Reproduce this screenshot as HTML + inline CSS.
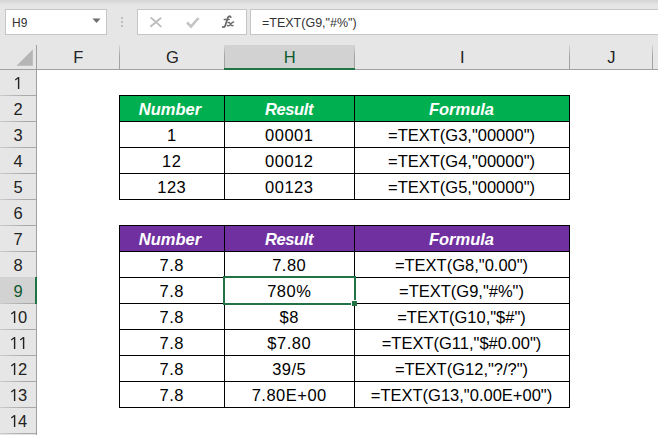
<!DOCTYPE html><html><head><meta charset="utf-8"><style>
*{margin:0;padding:0;box-sizing:border-box}
html,body{width:658px;height:435px;overflow:hidden;background:#fff}
body{position:relative;font-family:"Liberation Sans",sans-serif}
.a{position:absolute}
.t{position:absolute;white-space:nowrap;text-align:center;line-height:26px}
</style></head><body><div class="a" style="left:0;top:0;width:658px;height:69px;background:#e6e6e6"></div>
<div class="a" style="left:0;top:0;width:658px;height:5px;background:linear-gradient(#d5d5d5,#e6e6e6)"></div>
<div class="a" style="left:5px;top:9px;width:102px;height:26px;border:1px solid #c6c6c6;background:#fff"></div>
<div class="a" style="left:12px;top:10px;height:26px;line-height:26px;font-size:12px;color:#333">H9</div>
<svg class="a" style="left:0;top:0" width="658" height="69"><polygon points="92.5,18.5 100.5,18.5 96.5,23" fill="#6d6d6d"/><rect x="121" y="17" width="2" height="2" fill="#bdbdbd"/><rect x="121" y="21" width="2" height="2" fill="#bdbdbd"/><rect x="121" y="25" width="2" height="2" fill="#bdbdbd"/></svg>
<div class="a" style="left:137px;top:9px;width:110px;height:26px;border:1px solid #c6c6c6;background:#fff"></div>
<svg class="a" style="left:0;top:0" width="658" height="69"><path d="M151.2,17.9 L160.8,26.4 M160.6,18.2 L150.9,26.2" stroke="#bdbdbd" stroke-width="1.9" fill="none" stroke-linecap="round"/><path d="M187,22.5 L191,26.5 L198.5,18" stroke="#c4c4c4" stroke-width="2.6" fill="none"/></svg>
<svg class="a" style="left:0;top:0" width="658" height="69"><g stroke="#6b6b6b" fill="none" stroke-linecap="round"><path d="M230.8,17.2 C230.2,15.7 228.2,15.9 227.6,18.3 L225.4,25.2 C224.9,27.1 223.6,27.6 222.7,26.9" stroke-width="1.75"/><path d="M224.2,19.5 H229.2" stroke-width="1.3"/><path d="M228,22.6 Q229.2,22.1 230,23.4 L231.3,25.3 Q232.1,26.2 233,25.5 M233.6,22 Q232.6,22.1 231.3,23.5 L229.7,25.3 Q228.6,26.1 227.4,25.6" stroke-width="1.4"/></g></svg>
<div class="a" style="left:250px;top:9px;width:420px;height:26px;border:1px solid #c6c6c6;background:#fff"></div>
<div class="a" style="left:262px;top:10px;height:26px;line-height:26px;font-size:12.5px;color:#333">=TEXT(G9,"#%")</div>
<div class="a" style="left:0;top:69px;width:658px;height:1px;background:#a0a0a0"></div>
<div class="a" style="left:36px;top:45px;width:1px;height:24px;background:linear-gradient(#d6d6d6,#a6a6a6 45%,#a0a0a0)"></div>
<div class="t" style="left:36.8px;top:44px;width:83px;font-size:16.5px;color:#222">F</div>
<div class="a" style="left:119px;top:45px;width:1px;height:24px;background:linear-gradient(#d6d6d6,#a6a6a6 45%,#a0a0a0)"></div>
<div class="t" style="left:119.8px;top:44px;width:105px;font-size:16.5px;color:#222">G</div>
<div class="a" style="left:224px;top:45px;width:130px;height:24px;background:#d2d2d2"></div>
<div class="a" style="left:224px;top:45px;width:1px;height:24px;background:linear-gradient(#d6d6d6,#a6a6a6 45%,#a0a0a0)"></div>
<div class="t" style="left:224.8px;top:44px;width:130px;font-size:16.5px;color:#0e5a2e">H</div>
<div class="a" style="left:354px;top:45px;width:1px;height:24px;background:linear-gradient(#d6d6d6,#a6a6a6 45%,#a0a0a0)"></div>
<div class="t" style="left:354.8px;top:44px;width:215px;font-size:16.5px;color:#222">I</div>
<div class="a" style="left:569px;top:45px;width:1px;height:24px;background:linear-gradient(#d6d6d6,#a6a6a6 45%,#a0a0a0)"></div>
<div class="t" style="left:569.8px;top:44px;width:83px;font-size:16.5px;color:#222">J</div>
<div class="a" style="left:652px;top:45px;width:1px;height:24px;background:linear-gradient(#d6d6d6,#a6a6a6 45%,#a0a0a0)"></div>
<div class="a" style="left:224px;top:68px;width:131px;height:2px;background:#217346"></div>
<svg class="a" style="left:0;top:40px" width="37" height="30"><polygon points="16.5,25.8 32.8,25.8 32.8,9.4" fill="#b5b5b5"/></svg>
<div class="a" style="left:0;top:70px;width:36px;height:365px;background:#e6e6e6"></div>
<div class="a" style="left:36px;top:45px;width:1px;height:390px;background:#a0a0a0"></div>
<div class="a" style="left:0;top:95px;width:36px;height:1px;background:linear-gradient(to right,#cbcbcb,#a8a8a8 70%)"></div>
<div class="t" style="left:0;top:70px;width:36px;font-size:16.5px;color:#222"><span style="display:inline-block;width:9.17px;height:12px;vertical-align:baseline;position:relative"><svg width="10" height="12" style="position:absolute;left:0;top:0"><rect x="4.9" y="0.1" width="1.4" height="11.9" fill="#222"/><path d="M5.5,0.6 L2.2,2.9" stroke="#222" stroke-width="1.2"/></svg></span></div>
<div class="a" style="left:0;top:121px;width:36px;height:1px;background:linear-gradient(to right,#cbcbcb,#a8a8a8 70%)"></div>
<div class="t" style="left:0;top:96px;width:36px;font-size:16.5px;color:#222">2</div>
<div class="a" style="left:0;top:147px;width:36px;height:1px;background:linear-gradient(to right,#cbcbcb,#a8a8a8 70%)"></div>
<div class="t" style="left:0;top:122px;width:36px;font-size:16.5px;color:#222">3</div>
<div class="a" style="left:0;top:173px;width:36px;height:1px;background:linear-gradient(to right,#cbcbcb,#a8a8a8 70%)"></div>
<div class="t" style="left:0;top:148px;width:36px;font-size:16.5px;color:#222">4</div>
<div class="a" style="left:0;top:199px;width:36px;height:1px;background:linear-gradient(to right,#cbcbcb,#a8a8a8 70%)"></div>
<div class="t" style="left:0;top:174px;width:36px;font-size:16.5px;color:#222">5</div>
<div class="a" style="left:0;top:225px;width:36px;height:1px;background:linear-gradient(to right,#cbcbcb,#a8a8a8 70%)"></div>
<div class="t" style="left:0;top:200px;width:36px;font-size:16.5px;color:#222">6</div>
<div class="a" style="left:0;top:251px;width:36px;height:1px;background:linear-gradient(to right,#cbcbcb,#a8a8a8 70%)"></div>
<div class="t" style="left:0;top:226px;width:36px;font-size:16.5px;color:#222">7</div>
<div class="a" style="left:0;top:277px;width:36px;height:1px;background:linear-gradient(to right,#cbcbcb,#a8a8a8 70%)"></div>
<div class="t" style="left:0;top:252px;width:36px;font-size:16.5px;color:#222">8</div>
<div class="a" style="left:0;top:277px;width:36px;height:26px;background:#d2d2d2"></div>
<div class="a" style="left:0;top:303px;width:36px;height:1px;background:linear-gradient(to right,#cbcbcb,#a8a8a8 70%)"></div>
<div class="t" style="left:0;top:278px;width:36px;font-size:16.5px;color:#0e5a2e">9</div>
<div class="a" style="left:0;top:329px;width:36px;height:1px;background:linear-gradient(to right,#cbcbcb,#a8a8a8 70%)"></div>
<div class="t" style="left:0;top:304px;width:36px;font-size:16.5px;color:#222"><span style="display:inline-block;width:9.17px;height:12px;vertical-align:baseline;position:relative"><svg width="10" height="12" style="position:absolute;left:0;top:0"><rect x="4.9" y="0.1" width="1.4" height="11.9" fill="#222"/><path d="M5.5,0.6 L2.2,2.9" stroke="#222" stroke-width="1.2"/></svg></span>0</div>
<div class="a" style="left:0;top:355px;width:36px;height:1px;background:linear-gradient(to right,#cbcbcb,#a8a8a8 70%)"></div>
<div class="t" style="left:0;top:330px;width:36px;font-size:16.5px;color:#222"><span style="display:inline-block;width:9.17px;height:12px;vertical-align:baseline;position:relative"><svg width="10" height="12" style="position:absolute;left:0;top:0"><rect x="4.9" y="0.1" width="1.4" height="11.9" fill="#222"/><path d="M5.5,0.6 L2.2,2.9" stroke="#222" stroke-width="1.2"/></svg></span><span style="display:inline-block;width:9.17px;height:12px;vertical-align:baseline;position:relative"><svg width="10" height="12" style="position:absolute;left:0;top:0"><rect x="4.9" y="0.1" width="1.4" height="11.9" fill="#222"/><path d="M5.5,0.6 L2.2,2.9" stroke="#222" stroke-width="1.2"/></svg></span></div>
<div class="a" style="left:0;top:381px;width:36px;height:1px;background:linear-gradient(to right,#cbcbcb,#a8a8a8 70%)"></div>
<div class="t" style="left:0;top:356px;width:36px;font-size:16.5px;color:#222"><span style="display:inline-block;width:9.17px;height:12px;vertical-align:baseline;position:relative"><svg width="10" height="12" style="position:absolute;left:0;top:0"><rect x="4.9" y="0.1" width="1.4" height="11.9" fill="#222"/><path d="M5.5,0.6 L2.2,2.9" stroke="#222" stroke-width="1.2"/></svg></span>2</div>
<div class="a" style="left:0;top:407px;width:36px;height:1px;background:linear-gradient(to right,#cbcbcb,#a8a8a8 70%)"></div>
<div class="t" style="left:0;top:382px;width:36px;font-size:16.5px;color:#222"><span style="display:inline-block;width:9.17px;height:12px;vertical-align:baseline;position:relative"><svg width="10" height="12" style="position:absolute;left:0;top:0"><rect x="4.9" y="0.1" width="1.4" height="11.9" fill="#222"/><path d="M5.5,0.6 L2.2,2.9" stroke="#222" stroke-width="1.2"/></svg></span>3</div>
<div class="a" style="left:0;top:433px;width:36px;height:1px;background:linear-gradient(to right,#cbcbcb,#a8a8a8 70%)"></div>
<div class="t" style="left:0;top:408px;width:36px;font-size:16.5px;color:#222"><span style="display:inline-block;width:9.17px;height:12px;vertical-align:baseline;position:relative"><svg width="10" height="12" style="position:absolute;left:0;top:0"><rect x="4.9" y="0.1" width="1.4" height="11.9" fill="#222"/><path d="M5.5,0.6 L2.2,2.9" stroke="#222" stroke-width="1.2"/></svg></span>4</div>
<div class="a" style="left:35px;top:277px;width:2px;height:27px;background:#217346"></div>
<div class="a" style="left:119px;top:95px;width:451px;height:27px;background:#00b050"></div>
<div class="a" style="left:119px;top:95px;width:451px;height:1px;background:#000"></div>
<div class="a" style="left:119px;top:121px;width:451px;height:1px;background:#000"></div>
<div class="a" style="left:119px;top:147px;width:451px;height:1px;background:#000"></div>
<div class="a" style="left:119px;top:173px;width:451px;height:1px;background:#000"></div>
<div class="a" style="left:119px;top:199px;width:451px;height:1px;background:#000"></div>
<div class="a" style="left:119px;top:95px;width:1px;height:105px;background:#000"></div>
<div class="a" style="left:224px;top:95px;width:1px;height:105px;background:#000"></div>
<div class="a" style="left:354px;top:95px;width:1px;height:105px;background:#000"></div>
<div class="a" style="left:569px;top:95px;width:1px;height:105px;background:#000"></div>
<div class="t" style="left:117.5px;top:96px;width:105px;font-size:16.5px;font-weight:bold;font-style:italic;color:#fff">Number</div>
<div class="t" style="left:224px;top:96px;width:130px;font-size:16.5px;font-weight:bold;font-style:italic;color:#fff;letter-spacing:-0.4px">Result</div>
<div class="t" style="left:354px;top:96px;width:215px;font-size:16.5px;font-weight:bold;font-style:italic;color:#fff">Formula</div>
<div class="t" style="left:119px;top:122px;width:105px;font-size:16.5px;color:#000;letter-spacing:0.5px;padding-left:0.5px">1</div>
<div class="t" style="left:224px;top:122px;width:130px;font-size:16.5px;color:#000;letter-spacing:0.5px;padding-left:0.5px">00001</div>
<div class="t" style="left:354px;top:122px;width:215px;font-size:16.5px;color:#000">=TEXT(G3,&quot;00000&quot;)</div>
<div class="t" style="left:119px;top:148px;width:105px;font-size:16.5px;color:#000;letter-spacing:0.5px;padding-left:0.5px">12</div>
<div class="t" style="left:224px;top:148px;width:130px;font-size:16.5px;color:#000;letter-spacing:0.5px;padding-left:0.5px">00012</div>
<div class="t" style="left:354px;top:148px;width:215px;font-size:16.5px;color:#000">=TEXT(G4,&quot;00000&quot;)</div>
<div class="t" style="left:119px;top:174px;width:105px;font-size:16.5px;color:#000;letter-spacing:0.5px;padding-left:0.5px">123</div>
<div class="t" style="left:224px;top:174px;width:130px;font-size:16.5px;color:#000;letter-spacing:0.5px;padding-left:0.5px">00123</div>
<div class="t" style="left:354px;top:174px;width:215px;font-size:16.5px;color:#000">=TEXT(G5,&quot;00000&quot;)</div>
<div class="a" style="left:119px;top:225px;width:451px;height:27px;background:#7030a0"></div>
<div class="a" style="left:119px;top:225px;width:451px;height:1px;background:#000"></div>
<div class="a" style="left:119px;top:251px;width:451px;height:1px;background:#000"></div>
<div class="a" style="left:119px;top:277px;width:451px;height:1px;background:#000"></div>
<div class="a" style="left:119px;top:303px;width:451px;height:1px;background:#000"></div>
<div class="a" style="left:119px;top:329px;width:451px;height:1px;background:#000"></div>
<div class="a" style="left:119px;top:355px;width:451px;height:1px;background:#000"></div>
<div class="a" style="left:119px;top:381px;width:451px;height:1px;background:#000"></div>
<div class="a" style="left:119px;top:407px;width:451px;height:1px;background:#000"></div>
<div class="a" style="left:119px;top:225px;width:1px;height:183px;background:#000"></div>
<div class="a" style="left:224px;top:225px;width:1px;height:183px;background:#000"></div>
<div class="a" style="left:354px;top:225px;width:1px;height:183px;background:#000"></div>
<div class="a" style="left:569px;top:225px;width:1px;height:183px;background:#000"></div>
<div class="t" style="left:117.5px;top:226px;width:105px;font-size:16.5px;font-weight:bold;font-style:italic;color:#fff">Number</div>
<div class="t" style="left:224px;top:226px;width:130px;font-size:16.5px;font-weight:bold;font-style:italic;color:#fff;letter-spacing:-0.4px">Result</div>
<div class="t" style="left:354px;top:226px;width:215px;font-size:16.5px;font-weight:bold;font-style:italic;color:#fff">Formula</div>
<div class="t" style="left:119px;top:252px;width:105px;font-size:16.5px;color:#000;letter-spacing:0.5px;padding-left:0.5px">7.8</div>
<div class="t" style="left:224px;top:252px;width:130px;font-size:16.5px;color:#000;letter-spacing:0.5px;padding-left:0.5px">7.80</div>
<div class="t" style="left:354px;top:252px;width:215px;font-size:16.5px;color:#000">=TEXT(G8,&quot;0.00&quot;)</div>
<div class="t" style="left:119px;top:278px;width:105px;font-size:16.5px;color:#000;letter-spacing:0.5px;padding-left:0.5px">7.8</div>
<div class="t" style="left:224px;top:278px;width:130px;font-size:16.5px;color:#000;letter-spacing:0.5px;padding-left:0.5px">780%</div>
<div class="t" style="left:354px;top:278px;width:215px;font-size:16.5px;color:#000">=TEXT(G9,&quot;#%&quot;)</div>
<div class="t" style="left:119px;top:304px;width:105px;font-size:16.5px;color:#000;letter-spacing:0.5px;padding-left:0.5px">7.8</div>
<div class="t" style="left:224px;top:304px;width:130px;font-size:16.5px;color:#000;letter-spacing:0.5px;padding-left:0.5px">$8</div>
<div class="t" style="left:354px;top:304px;width:215px;font-size:16.5px;color:#000">=TEXT(G10,&quot;$#&quot;)</div>
<div class="t" style="left:119px;top:330px;width:105px;font-size:16.5px;color:#000;letter-spacing:0.5px;padding-left:0.5px">7.8</div>
<div class="t" style="left:224px;top:330px;width:130px;font-size:16.5px;color:#000;letter-spacing:0.5px;padding-left:0.5px">$7.80</div>
<div class="t" style="left:354px;top:330px;width:215px;font-size:16.5px;color:#000">=TEXT(G11,&quot;$#0.00&quot;)</div>
<div class="t" style="left:119px;top:356px;width:105px;font-size:16.5px;color:#000;letter-spacing:0.5px;padding-left:0.5px">7.8</div>
<div class="t" style="left:224px;top:356px;width:130px;font-size:16.5px;color:#000;letter-spacing:0.5px;padding-left:0.5px">39/5</div>
<div class="t" style="left:354px;top:356px;width:215px;font-size:16.5px;color:#000">=TEXT(G12,&quot;?/?&quot;)</div>
<div class="t" style="left:119px;top:382px;width:105px;font-size:16.5px;color:#000;letter-spacing:0.5px;padding-left:0.5px">7.8</div>
<div class="t" style="left:224px;top:382px;width:130px;font-size:16.5px;color:#000;letter-spacing:0.5px;padding-left:0.5px">7.80E+00</div>
<div class="t" style="left:354px;top:382px;width:215px;font-size:16.5px;color:#000">=TEXT(G13,&quot;0.00E+00&quot;)</div>
<div class="a" style="left:223px;top:276px;width:133px;height:29px;border:2px solid #217346"></div>
<div class="a" style="left:351px;top:300px;width:6px;height:6px;background:#fff"></div>
<div class="a" style="left:352px;top:301px;width:5px;height:5px;background:#217346"></div></body></html>
